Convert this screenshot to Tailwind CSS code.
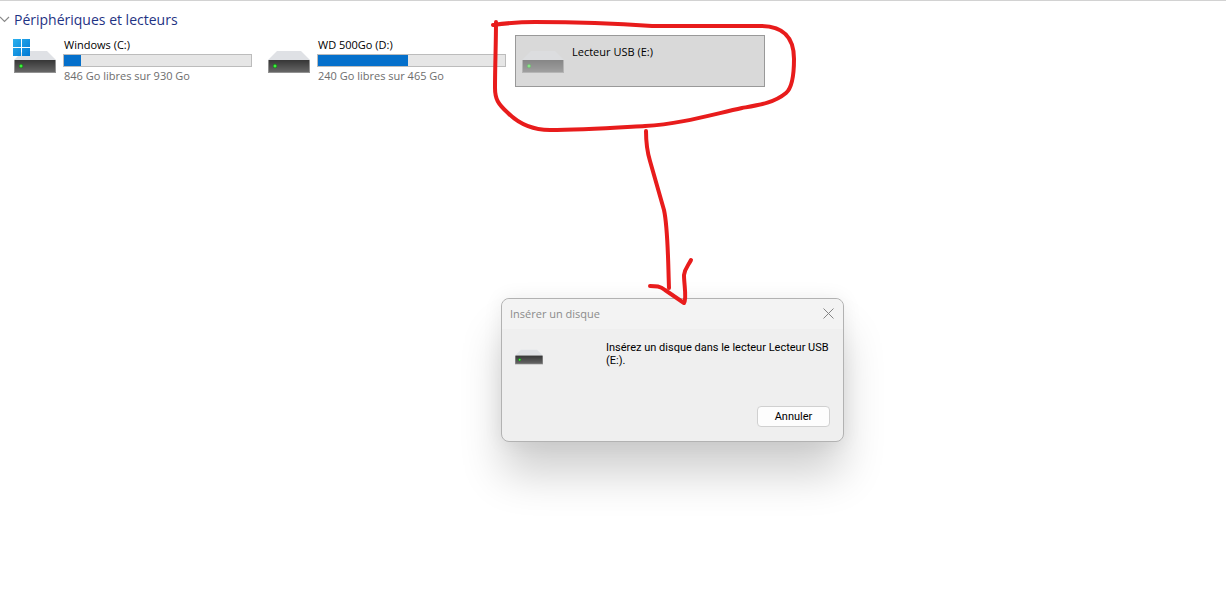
<!DOCTYPE html>
<html lang="fr">
<head>
    <meta charset="utf-8">
    <meta name="viewport" content="width=device-width, initial-scale=1">
    <title>Périphériques et lecteurs</title>
    <script src="https://cdn.jsdelivr.net/npm/@tailwindcss/browser@4"></script>
</head>
<body class="relative min-h-screen bg-white font-['Open_Sans','Noto_Sans',sans-serif] text-[11px] text-black">

    <!-- Shared drive icon -->
    <svg class="absolute size-0" aria-hidden="true">
        <defs>
            <linearGradient id="drive-front" x1="0" y1="0" x2="0" y2="1">
                <stop offset="0" stop-color="#363636"/>
                <stop offset="1" stop-color="#666666"/>
            </linearGradient>
            <linearGradient id="win-blue" x1="0" y1="0" x2="1" y2="1">
                <stop offset="0" stop-color="#2cb1ee"/>
                <stop offset="1" stop-color="#0078d4"/>
            </linearGradient>
        </defs>
        <symbol id="drive" viewBox="0 0 42 22">
            <path d="M9 0H33L42 9H0Z" fill="#dfe1e5"/>
            <rect x="0" y="9" width="42" height="13" fill="#929292"/>
            <rect x="1" y="9" width="40" height="12" fill="url(#drive-front)"/>
            <circle cx="7" cy="15" r="2.2" fill="#1d7a1d"/>
            <circle cx="7" cy="15" r="1.5" fill="#3cf03c"/>
        </symbol>
    </svg>

    <main class="border-t border-[#d2d2d2] pt-[6px]">
        <h1>
            <button type="button" aria-expanded="true" class="flex h-6 items-center gap-1 text-[14px] text-[#1f3384]">
                <svg class="h-2 w-[10px]" viewBox="0 0 10 8" fill="none" stroke="#8a8a8a" stroke-width="1.2" aria-hidden="true">
                    <path d="M0 2L4.500 6.500L9 2"/>
                </svg>
                Périphériques et lecteurs
            </button>
        </h1>

        <ul class="flex flex-wrap gap-1 pt-1 pl-[7px]">
            <li class="flex h-[52px] w-[250px] gap-[7px] pl-[7px] pr-[5px]">
                <div class="relative shrink-0 pt-4">
                    <svg class="h-[22px] w-[42px]" aria-hidden="true"><use href="#drive"/></svg>
                    <svg class="absolute top-1 -left-px size-[17px]" viewBox="0 0 17 17" fill="url(#win-blue)" aria-hidden="true">
                        <path d="M0 0H8V8H0ZM9 0H17V8H9ZM0 9H8V17H0ZM9 9H17V17H9Z"/>
                    </svg>
                </div>
                <div class="grow pt-[2px]">
                    <p class="pl-px leading-4">Windows (C:)</p>
                    <div class="mt-px h-[13px] border border-[#bcbcbc] bg-[#e6e6e6]">
                        <div class="h-full bg-[#0570cb]" style="width: 9%"></div>
                    </div>
                    <p class="pl-px leading-[18px] text-[#6d6d6d]">846 Go libres sur 930 Go</p>
                </div>
            </li>
            <li class="flex h-[52px] w-[250px] gap-[7px] pl-[7px] pr-[5px]">
                <div class="shrink-0 pt-4">
                    <svg class="h-[22px] w-[42px]" aria-hidden="true"><use href="#drive"/></svg>
                </div>
                <div class="grow pt-[2px]">
                    <p class="pl-px leading-4">WD 500Go (D:)</p>
                    <div class="mt-px h-[13px] border border-[#bcbcbc] bg-[#e6e6e6]">
                        <div class="h-full bg-[#0570cb]" style="width: 48%"></div>
                    </div>
                    <p class="pl-px leading-[18px] text-[#6d6d6d]">240 Go libres sur 465 Go</p>
                </div>
            </li>
            <li class="flex h-[52px] w-[250px] gap-[7px] border border-[#999999] bg-[#d9d9d9] pl-[6px] pr-1">
                <div class="shrink-0 pt-[15px]">
                    <svg class="h-[22px] w-[42px] opacity-50" aria-hidden="true"><use href="#drive"/></svg>
                </div>
                <p class="pt-2 pl-px leading-4">Lecteur USB (E:)</p>
            </li>
        </ul>
    </main>

    <!-- Insert disk dialog -->
    <section role="dialog" aria-labelledby="dialog-title" class="absolute top-[298px] left-[501px] w-[343px] rounded-lg border border-[#b2b2b2] bg-[#efefef] shadow-[0_34px_44px_-2px_rgba(0,0,0,0.19),0_0_20px_rgba(0,0,0,0.07)]">
        <header class="flex h-[30px] items-center justify-between rounded-t-lg bg-[#f3f3f3] pr-[9px] pl-2">
            <h2 id="dialog-title" class="text-[#8b8b8b]">Insérer un disque</h2>
            <button type="button" aria-label="Fermer" class="pb-[2px]">
                <svg class="size-[11px]" viewBox="0 0 11 11" fill="none" stroke="#848484" aria-hidden="true">
                    <path d="M0.500 0.500L10.500 10.500M10.500 0.500L0.500 10.500"/>
                </svg>
            </button>
        </header>
        <div class="flex gap-[63px] pt-3 pr-3 pl-[13px]">
            <svg class="mt-2 h-4 w-7 shrink-0" aria-hidden="true"><use href="#drive"/></svg>
            <p class="h-[52px] font-[Roboto,sans-serif] leading-[13px]">Insérez un disque dans le lecteur Lecteur USB (E:).</p>
        </div>
        <footer class="flex justify-end pt-[13px] pr-[13px] pb-[14px]">
            <button type="button" class="h-[21px] w-[73px] rounded-sm border border-[#d0d0d0] bg-[#fdfdfd] font-[Roboto,sans-serif] leading-4">Annuler</button>
        </footer>
    </section>

    <!-- Hand-drawn circle and arrow -->
    <svg class="pointer-events-none absolute top-0 left-0 h-[320px] w-[810px]" viewBox="0 0 810 320" fill="none" stroke="#e81c1c" stroke-width="4" stroke-linecap="round" stroke-linejoin="round" aria-hidden="true">
        <path d="M493 25C508 23 520 22 535 22C580 22 610 23 652 26H760C781 26 794 35 794 59C794 76 792 88 786 93C774 103 759 105 742 108C710 115 680 124 645 126C610 128 580 130 550 130C532 130 519 124 508 113C498 104 495 99 495 88C495 65 496 45 496 22"/>
        <path d="M646 131C646 144 647 151 650 161L664 210C668 228 668 260 669 288"/>
        <path d="M650 286C656 286 660 286 665 290L684 303C687 298 684 285 684 275C685 268 688 266 691 260"/>
    </svg>
</body>
</html>
